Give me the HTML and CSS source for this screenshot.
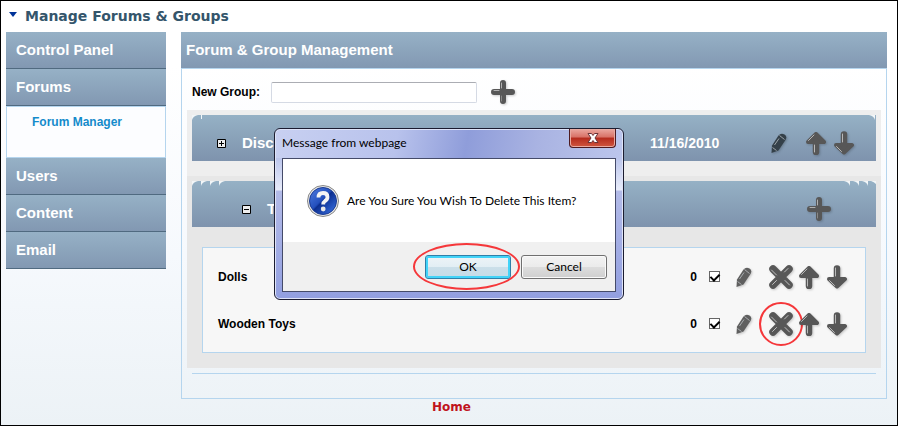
FILE: index.html
```html
<!DOCTYPE html>
<html lang="en">
<head>
<meta charset="utf-8">
<title>Manage Forums &amp; Groups</title>
<link rel="stylesheet" href="styles.css">
</head>
<body>
<svg class="defs" aria-hidden="true">
  <defs>
    <symbol id="plus" viewBox="0 0 24 24">
      <path d="M12 3v18M3 12h18" stroke="#575757" stroke-width="6" stroke-linecap="round"/>
      <path d="M10.500 3v5M3 10.500h5" stroke="#b0b0b0" stroke-width="1" stroke-linecap="round"/>
      <path d="M10.500 16v5" stroke="#888" stroke-width="1" stroke-linecap="round"/>
    </symbol>
    <symbol id="cross" viewBox="0 0 24 24">
      <path d="M4 4l16 16M20 4L4 20" stroke="#575757" stroke-width="7.500" stroke-linecap="round"/>
      <path d="M2.500 5l5 5M15.500 7l3.500-3.500M16 15.500l4.500 4.500M3.500 19.500l4-4" stroke="#c0c0c0" stroke-width="1" stroke-linecap="round"/>
    </symbol>
    <symbol id="up" viewBox="0 0 24 24">
      <path d="M12 3L20 11H4z" stroke="#575757" stroke-width="4" stroke-linejoin="round" fill="#575757"/>
      <path d="M12 11v10" stroke="#575757" stroke-width="6.500" stroke-linecap="round"/>
      <path d="M4.500 9.500L10 4M10.500 14v7" stroke="#b8b8b8" stroke-width="1" stroke-linecap="round"/>
    </symbol>
    <symbol id="down" viewBox="0 0 24 24">
      <path d="M12 21.500L20 14H4z" stroke="#575757" stroke-width="4" stroke-linejoin="round" fill="#575757"/>
      <path d="M12 3.500V14" stroke="#575757" stroke-width="6.500" stroke-linecap="round"/>
      <path d="M10.500 3v8M4.500 15.500l5 5" stroke="#b8b8b8" stroke-width="1" stroke-linecap="round"/>
    </symbol>
    <symbol id="pencil" viewBox="0 0 24 24">
      <path d="M4.500 22L5 14.500 11.500 4.500Q14 1.500 17.500 3.500 20.500 5.500 18.500 9L11.500 19.500z" fill="currentColor"/>
      <path d="M7.500 14L12 7.500" stroke="#b8bec2" stroke-width="1" opacity=".8"/>
      <path d="M12.500 4.500l5 4M5.500 16.500l4 3" stroke="#c8ccd0" stroke-width="1" opacity=".7"/>
    </symbol>
    <symbol id="notch" viewBox="0 0 9 6">
      <path d="M0 0H6Q1 1 0 5z" fill="#f2f6f8"/>
    </symbol>
  </defs>
</svg>

<div class="page">
  <h1 class="title"><svg class="caret" viewBox="0 0 8 5" aria-hidden="true"><path d="M0 0h8L4 5z" fill="#003399"/></svg>Manage Forums &amp; Groups</h1>

  <div class="columns">
    <nav class="sidebar">
      <a class="nav-item" href="#">Control Panel</a>
      <a class="nav-item" href="#">Forums</a>
      <div class="subnav"><a href="#">Forum Manager</a></div>
      <a class="nav-item" href="#">Users</a>
      <a class="nav-item" href="#">Content</a>
      <a class="nav-item" href="#">Email</a>
    </nav>

    <main class="main">
      <h2 class="main-title">Forum &amp; Group Management</h2>
      <div class="panel">
        <form class="new-group">
          <label for="group-name">New Group:</label>
          <input id="group-name" type="text">
          <button class="icon" type="button" aria-label="Add group"><svg><use href="#plus"/></svg></button>
        </form>

        <section class="group">
          <div class="bar">
            <svg class="corner" viewBox="0 0 36 6" aria-hidden="true"><use href="#notch" width="9" height="6"/><path d="M9.500 0v4" stroke="#f2f6f8"/></svg>
            <svg class="corner corner-right" viewBox="0 0 36 6" aria-hidden="true"><path d="M29 0h6v5Q34 1 29 0z" fill="#f2f6f8"/></svg>
            <button class="toggle" type="button" aria-label="Expand"><svg viewBox="0 0 9 9"><path d="M.5.5h8v8h-8z" fill="#eee" stroke="#000"/><path d="M2 4.500h5M4.500 2v5" stroke="#000"/></svg></button>
            <h3>Disc</h3>
            <time class="date">11/16/2010</time>
            <button class="icon edit dark" type="button" aria-label="Edit"><svg><use href="#pencil"/></svg></button>
            <button class="icon" type="button" aria-label="Move up"><svg><use href="#up"/></svg></button>
            <button class="icon" type="button" aria-label="Move down"><svg><use href="#down"/></svg></button>
          </div>
        </section>

        <section class="group open">
          <div class="bar nested">
            <svg class="corner" viewBox="0 0 36 6" aria-hidden="true"><use href="#notch" width="9" height="6"/><use href="#notch" x="9" width="9" height="6"/><use href="#notch" x="18" width="9" height="6"/><use href="#notch" x="27" width="9" height="6"/></svg>
            <svg class="corner corner-right" viewBox="0 0 36 6" aria-hidden="true"><path d="M4 0h6v5Q9 1 4 0zM13 0h6v5Q18 1 13 0zM22 0h6v5Q27 1 22 0zM31 0h5v3Q34 1 31 0z" fill="#f2f6f8"/></svg>
            <button class="toggle" type="button" aria-label="Collapse"><svg viewBox="0 0 9 9"><path d="M.5.5h8v8h-8z" fill="#eee" stroke="#000"/><path d="M2 4.500h5" stroke="#000"/></svg></button>
            <h3>T</h3>
            <button class="icon add" type="button" aria-label="Add forum"><svg><use href="#plus"/></svg></button>
          </div>
          <ul class="forums">
            <li>
              <label class="name" for="dolls">Dolls</label>
              <span class="count">0</span>
              <input class="check" id="dolls" type="checkbox" checked>
              <button class="icon edit" type="button" aria-label="Edit"><svg><use href="#pencil"/></svg></button>
              <button class="icon" type="button" aria-label="Delete"><svg><use href="#cross"/></svg></button>
              <button class="icon" type="button" aria-label="Move up"><svg><use href="#up"/></svg></button>
              <button class="icon" type="button" aria-label="Move down"><svg><use href="#down"/></svg></button>
            </li>
            <li>
              <label class="name" for="toys">Wooden Toys</label>
              <span class="count">0</span>
              <input class="check" id="toys" type="checkbox" checked>
              <button class="icon edit" type="button" aria-label="Edit"><svg><use href="#pencil"/></svg></button>
              <button class="icon marked" type="button" aria-label="Delete"><svg><use href="#cross"/></svg></button>
              <button class="icon" type="button" aria-label="Move up"><svg><use href="#up"/></svg></button>
              <button class="icon" type="button" aria-label="Move down"><svg><use href="#down"/></svg></button>
            </li>
          </ul>
        </section>
        <hr>
      </div>
    </main>
  </div>
  <footer><a href="#">Home</a></footer>
</div>

<div class="dialog" role="dialog" aria-labelledby="dialog-title">
  <div class="dialog-head">
    <span id="dialog-title">Message from webpage</span>
    <button class="close" type="button" aria-label="Close"><svg viewBox="0 0 12 10"><path d="M1 .5h3.500L6 2.500 7.500.5H11L8 5l3 4.500H7.500L6 7.500 4.500 9.500H1L4 5z" fill="#fff" stroke="#6b3438"/></svg></button>
  </div>
  <div class="dialog-body">
    <div class="message">
      <svg class="question" viewBox="0 0 32 32" aria-hidden="true">
        <defs><linearGradient id="ball" x1="0" y1="0" x2="1" y2="1"><stop offset="0" stop-color="#4f7ce0"/><stop offset=".45" stop-color="#2450bd"/><stop offset=".5" stop-color="#0c2f91"/><stop offset="1" stop-color="#3f78ea"/></linearGradient></defs>
        <circle cx="16" cy="16" r="15.500" fill="#e6e6e6" stroke="#888"/>
        <circle cx="16" cy="16" r="13.500" fill="url(#ball)" stroke="#1c3c93"/>
        <path d="M11.500 12.500Q11.500 8 16 8t4.500 4q0 2.500-2.500 4-1.800 1.200-1.800 3.500" fill="none" stroke="#f4f4f4" stroke-width="3.800"/>
        <circle cx="16.200" cy="24" r="2.400" fill="#e8e8e8"/>
      </svg>
      <p>Are You Sure You Wish To Delete This Item?</p>
    </div>
    <div class="actions">
      <button class="btn primary" type="button">OK</button>
      <button class="btn" type="button">Cancel</button>
    </div>
  </div>
</div>
</body>
</html>
```
FILE: styles.css
```css
* {
  box-sizing: border-box;
}

body {
  margin: 0;
  position: relative;
  font: bold 12px/16px "Liberation Sans", Arial, sans-serif;
  color: #000;
}

.defs {
  position: absolute;
  width: 0;
  height: 0;
}

svg {
  display: block;
  fill: none;
}

h1, h2, h3, p, ul {
  margin: 0;
  padding: 0;
}

button {
  font: inherit;
  padding: 0;
}

a {
  text-decoration: none;
}

.page {
  min-height: 100vh;
  border: 1px solid #000;
  padding: 5px 10px 0 5px;
  background: linear-gradient(#fff 15%, #f6f9fd 60%, #ecf2f6);
}

.title {
  display: flex;
  align-items: center;
  gap: 8px;
  padding-left: 3px;
  height: 20px;
  font: bold 14px/20px "DejaVu Sans", Verdana, sans-serif;
  color: #34556b;
}

.caret {
  width: 8px;
  height: 5px;
  margin-bottom: 4px;
}

.columns {
  display: grid;
  grid-template-columns: 160px 1fr;
  gap: 15px;
  margin-top: 6px;
}

.nav-item,
.main-title {
  display: block;
  height: 37px;
  font-size: 15px;
  line-height: 36px;
  color: #fff;
  background: linear-gradient(#96b1c6, #8298b2);
}

.nav-item {
  padding-left: 10px;
  border-bottom: 1px solid #506a80;
}

.subnav {
  height: 52px;
  padding: 7px 25px;
  border: 1px solid #b5d5ee;
  background: #fcfdff;
}

.subnav a {
  color: #148bcb;
}

.main-title {
  height: 36px;
  padding-left: 5px;
}

.panel {
  border: 1px solid #b5d5ee;
  padding: 9px 5px 24px;
}

.new-group {
  display: flex;
  align-items: center;
  height: 28px;
  margin-bottom: 4px;
  padding-left: 5px;
}

.new-group label {
  width: 79px;
}

.new-group input {
  width: 206px;
  height: 21px;
  margin-right: 12px;
  border: 1px solid #d5dae4;
  border-top-color: #abadb3;
  border-radius: 2px;
  background: #fff;
}

.icon {
  display: grid;
  place-items: center;
  flex: none;
  width: 28px;
  height: 28px;
  border: 0;
  background: none;
  color: #5f5f5f;
}

.icon svg {
  width: 24px;
  height: 24px;
  filter: drop-shadow(1px 1px 1px rgb(0 0 0 / 20%));
}

.icon.dark {
  color: #344049;
}

.icon.edit {
  margin-right: 9px;
}

.group {
  padding: 5px 5px 15px;
  background: #eee;
}

.group.open {
  background: #e7e7e7;
}

.bar {
  position: relative;
  display: flex;
  align-items: center;
  height: 46px;
  padding: 10px 18px 0 25px;
  color: #fff;
  background: linear-gradient(#95b1c5, #7e93ad);
}

.bar.nested {
  padding-left: 50px;
}

.corner {
  position: absolute;
  top: 0;
  left: 0;
  width: 36px;
  height: 6px;
}

.corner-right {
  left: auto;
  right: 0;
}

.toggle {
  width: 9px;
  height: 9px;
  margin-right: 16px;
  border: 0;
  background: none;
}

.bar h3 {
  flex: 1;
  font-size: 15px;
}

.date {
  width: 115px;
  font-size: 14px;
}

.icon.add {
  margin-right: 25px;
}

.forums {
  margin: 20px 10px 0;
  padding: 5px 0;
  list-style: none;
  border: 1px solid #b5d5ee;
  background: #f7f7f7;
}

.forums li {
  display: flex;
  align-items: center;
  height: 47px;
  padding: 0 14px 0 15px;
}

.name {
  flex: 1;
}

.check {
  display: grid;
  place-items: center;
  appearance: none;
  width: 11px;
  height: 11px;
  margin: 0 10px 0 12px;
  border: 1px solid #666;
  background: #fff;
}

.check:checked::after {
  content: "";
  width: 4px;
  height: 7px;
  margin-bottom: 2px;
  border: solid #000;
  border-width: 0 2px 2px 0;
  transform: rotate(45deg);
}

.marked {
  position: relative;
}

.marked::after {
  content: "";
  position: absolute;
  inset: -8px;
  border: 2px solid #f5373a;
  border-radius: 50%;
}

hr {
  height: 1px;
  margin: 5px 5px 0;
  border: 0;
  background: #b5d5ee;
}

footer {
  padding-left: 10px;
  text-align: center;
  font: bold 12px/16px "DejaVu Sans", Verdana, sans-serif;
}

footer a {
  color: #c0141c;
}

.dialog {
  position: absolute;
  top: 128px;
  left: 50%;
  width: 350px;
  transform: translateX(-50%);
  padding: 0 7px 7px;
  border: 1px solid #1b1c30;
  border-radius: 6px;
  font: 12px/16px Lato, "Open Sans", sans-serif;
  background:
    linear-gradient(100deg, #c8d0f1, #b8c2ec 35%, #8f9dda 55%, #a9b3e2 75%, #bcc6ec) top / 100% 29px no-repeat,
    linear-gradient(#bcc6ec 29px, #e8ecfa 61px, #b3bbe8 62px, #929fe0);
  box-shadow: inset 0 0 0 1px #dfe4f8;
}

.dialog-head {
  display: flex;
  justify-content: space-between;
  height: 29px;
}

.dialog-head span {
  line-height: 28px;
}

.close {
  display: grid;
  place-items: center;
  width: 47px;
  height: 19px;
  border: 1px solid #4d1a20;
  border-top: 0;
  border-radius: 0 0 4px 4px;
  background: linear-gradient(#eba8a0, #d87166 45%, #b52b1d 50%, #d0563f);
  box-shadow: inset 0 0 0 1px #e9a9a0;
}

.close svg {
  width: 12px;
  height: 10px;
}

.dialog-body {
  border: 1px solid #454b69;
  background: #f0f0f0;
}

.message {
  display: flex;
  align-items: center;
  gap: 8px;
  height: 83px;
  padding-left: 24px;
  background: #fff;
}

.question {
  flex: none;
  width: 32px;
  height: 32px;
}

.actions {
  display: flex;
  justify-content: flex-end;
  gap: 10px;
  padding: 13px 8px 12px;
}

.btn {
  position: relative;
  width: 86px;
  height: 24px;
  border: 1px solid #707070;
  border-radius: 3px;
  background: linear-gradient(#f3f3f3, #ebebeb 50%, #ddd 50%, #cfcfcf);
  box-shadow: inset 0 0 0 1px #fafafa;
}

.primary {
  border-color: #2f7fa8;
  background: linear-gradient(#eef4f7, #e2eef4 50%, #cbdfe9 50%, #c4dbe7);
  box-shadow: inset 0 0 0 2px #42d3f8;
}

.primary::after {
  content: "";
  position: absolute;
  inset: -13px -10px -12px -13px;
  border: 2px solid #f5373a;
  border-radius: 50%;
}
```
